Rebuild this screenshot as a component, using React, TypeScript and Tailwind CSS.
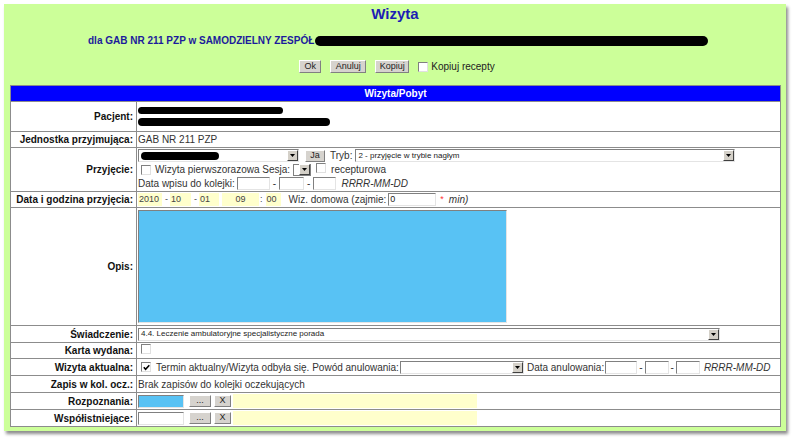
import React from "react";

function Check({ checked = false }: { checked?: boolean }) {
  return (
    <span className="inline-flex w-[10px] h-[10px] shrink-0 items-center justify-center border border-t-[#808080] border-l-[#808080] border-b-[#e0e0e0] border-r-[#e0e0e0] bg-white">
      {checked && (
        <svg width="7" height="7" viewBox="0 0 7 7">
          <path d="M0.8 3.2 L2.6 5.2 L6.3 1.2" stroke="#000" strokeWidth="1.6" fill="none" />
        </svg>
      )}
    </span>
  );
}

function Arrow() {
  return (
    <span className="flex w-[11px] h-[11px] shrink-0 items-center justify-center bg-[#d4d0c8] border border-t-white border-l-white border-r-[#404040] border-b-[#404040]">
      <svg width="5" height="3" viewBox="0 0 5 3">
        <path d="M0 0h5L2.5 3z" fill="#000" />
      </svg>
    </span>
  );
}

function Select({ className, children }: { className: string; children?: React.ReactNode }) {
  return (
    <div className={`flex shrink-0 items-center h-[13px] bg-white border border-t-[#808080] border-l-[#808080] border-b-[#e4e4e4] border-r-[#e4e4e4] ${className}`}>
      <div className="flex-1 flex items-center overflow-hidden whitespace-nowrap pl-[2px] text-[8px] text-[#222]">{children}</div>
      <Arrow />
    </div>
  );
}

function Box({ className }: { className: string }) {
  return (
    <span className={`inline-block shrink-0 h-[13px] bg-white border border-t-[#808080] border-l-[#808080] border-b-[#e4e4e4] border-r-[#e4e4e4] ${className}`} />
  );
}

function Btn({ className, children }: { className: string; children: React.ReactNode }) {
  return (
    <span className={`inline-flex shrink-0 items-center justify-center bg-[#d6d3ce] border border-t-white border-l-white border-r-[#808080] border-b-[#808080] text-[9px] text-[#222] ${className}`}>
      {children}
    </span>
  );
}

function Row({ label, h, children, top = "items-center" }: { label: string; h: string; children?: React.ReactNode; top?: string }) {
  return (
    <div className={`flex border-t border-[#8c8c8c] ${h}`}>
      <div className="w-[126px] shrink-0 flex items-center justify-end pr-[3px] border-r border-[#8c8c8c] whitespace-nowrap text-[10px] font-bold text-[#111]">
        {label}
      </div>
      <div className={`flex-1 flex pl-[1px] whitespace-nowrap text-[10px] text-[#333] ${top}`}>{children}</div>
    </div>
  );
}

export default function App() {
  return (
    <div className="w-[797px] h-[440px] bg-white pt-[4px] pl-[4px] font-['Liberation_Sans',Arial,sans-serif] overflow-hidden">
      <div className="w-[782px] h-[427px] bg-[#ccff99] shadow-[2px_3px_3px_rgba(0,0,0,0.45)] flex flex-col">
        <div className="h-[20px] flex items-center justify-center text-[15px] font-bold text-[#1c1cb4]">Wizyta</div>

        <div className="h-[33px] flex items-center pl-[84px] whitespace-nowrap text-[10px] font-bold text-[#1c1c9c]">
          <span>dla GAB NR 211 PZP w SAMODZIELNY ZESPÓŁ</span>
          <span className="ml-[1px] w-[393px] h-[10px] rounded-full bg-black" />
        </div>

        <div className="h-[19px] flex items-center justify-center gap-[9px] pl-[4px]">
          <Btn className="w-[22px] h-[13px]">Ok</Btn>
          <Btn className="w-[36px] h-[13px]">Anuluj</Btn>
          <Btn className="w-[34px] h-[13px]">Kopiuj</Btn>
          <span className="flex items-center gap-[3px] whitespace-nowrap text-[10px] text-[#222]">
            <Check />
            Kopiuj recepty
          </span>
        </div>

        <div className="mt-[9px] ml-[6px] w-[771px] border border-[#8c8c8c] bg-white flex flex-col">
          <div className="h-[15px] bg-[#0000ff] flex items-center justify-center text-[10px] font-bold text-white">Wizyta/Pobyt</div>

          <Row label="Pacjent:" h="h-[30px]" top="flex-col justify-center gap-[4px]">
            <span className="w-[145px] h-[7px] rounded-full bg-black" />
            <span className="w-[192px] h-[8px] rounded-full bg-black" />
          </Row>

          <Row label="Jednostka przyjmująca:" h="h-[16px]">GAB NR 211 PZP</Row>

          <Row label="Przyjęcie:" h="h-[44px]" top="flex-col justify-center gap-[1px]">
            <div className="flex items-center h-[13px]">
              <Select className="w-[161px]">
                <span className="w-[78px] h-[8px] rounded-full bg-black" />
              </Select>
              <Btn className="ml-[6px] w-[20px] h-[12px]">Ja</Btn>
              <span className="ml-[5px]">Tryb:</span>
              <Select className="ml-[3px] w-[380px]">2 - przyjęcie w trybie nagłym</Select>
            </div>
            <div className="flex items-center h-[13px] pl-[3px]">
              <Check />
              <span className="ml-[4px]">Wizyta pierwszorazowa Sesja:</span>
              <span className="ml-[3px] flex items-center h-[12px] w-[18px] border border-[#808080] bg-white justify-end">
                <Arrow />
              </span>
              <span className="ml-[5px]"><Check /></span>
              <span className="ml-[5px]">recepturowa</span>
            </div>
            <div className="flex items-center h-[13px]">
              <span>Data wpisu do kolejki:</span>
              <Box className="ml-[2px] w-[33px]" />
              <span className="mx-[3px]">-</span>
              <Box className="w-[25px]" />
              <span className="mx-[3px]">-</span>
              <Box className="w-[23px]" />
              <span className="ml-[5px] italic">RRRR-MM-DD</span>
            </div>
          </Row>

          <Row label="Data i godzina przyjęcia:" h="h-[16px]">
            <div className="flex items-center h-[13px] text-[9px] text-[#444]">
              <span className="w-[24px] h-[13px] bg-[#ffffcc] flex items-center pl-[1px]">2010</span>
              <span className="ml-[3px]">-</span>
              <span className="ml-[2px] w-[21px] h-[13px] bg-[#ffffcc] flex items-center pl-[1px]">10</span>
              <span className="ml-[3px]">-</span>
              <span className="ml-[2px] w-[20px] h-[13px] bg-[#ffffcc] flex items-center pl-[1px]">01</span>
              <span className="ml-[3px] w-[37px] h-[13px] bg-[#ffffcc] flex items-center justify-center">09</span>
              <span className="ml-[1px]">:</span>
              <span className="ml-[3px] w-[15px] h-[13px] bg-[#ffffcc] flex items-center pl-[1px]">00</span>
              <span className="ml-[8px] text-[10px] text-[#333]">Wiz. domowa (zajmie:</span>
              <span className="ml-[2px] w-[48px] h-[13px] bg-white border border-t-[#808080] border-l-[#808080] border-b-[#e4e4e4] border-r-[#e4e4e4] flex items-center pl-[1px] text-[#222]">0</span>
              <span className="ml-[4px] text-[#ff3333]">*</span>
              <span className="ml-[5px] text-[10px] italic text-[#333]">min)</span>
            </div>
          </Row>

          <Row label="Opis:" h="h-[118px]">
            <div className="w-[369px] h-[113px] bg-[#58c2f4] border border-t-[#808080] border-l-[#808080] border-b-[#e4e4e4] border-r-[#e4e4e4]" />
          </Row>

          <Row label="Świadczenie:" h="h-[17px]">
            <Select className="w-[582px]">4.4. Leczenie ambulatoryjne specjalistyczne porada</Select>
          </Row>

          <Row label="Karta wydana:" h="h-[16px]">
            <span className="pl-[3px]"><Check /></span>
          </Row>

          <Row label="Wizyta aktualna:" h="h-[17px]">
            <span className="pl-[3px]"><Check checked /></span>
            <span className="ml-[5px]">Termin aktualny/Wizyta odbyła się. Powód anulowania:</span>
            <Select className="ml-[1px] w-[124px]" />
            <span className="ml-[3px]">Data anulowania:</span>
            <Box className="ml-[1px] w-[32px]" />
            <span className="mx-[2px]">-</span>
            <Box className="w-[24px]" />
            <span className="mx-[2px]">-</span>
            <Box className="w-[24px]" />
            <span className="ml-[4px] italic">RRRR-MM-DD</span>
          </Row>

          <Row label="Zapis w kol. ocz.:" h="h-[17px]">Brak zapisów do kolejki oczekujących</Row>

          <Row label="Rozpoznania:" h="h-[17px]">
            <span className="w-[46px] h-[13px] bg-[#58c2f4] border border-t-[#808080] border-l-[#808080] border-b-[#e4e4e4] border-r-[#e4e4e4]" />
            <Btn className="ml-[5px] w-[22px] h-[12px]">...</Btn>
            <Btn className="ml-[3px] w-[17px] h-[12px]">X</Btn>
            <span className="ml-[2px] w-[244px] h-[14px] bg-[#ffffcc]" />
          </Row>

          <Row label="Współistniejące:" h="h-[17px]">
            <Box className="w-[46px]" />
            <Btn className="ml-[5px] w-[22px] h-[12px]">...</Btn>
            <Btn className="ml-[3px] w-[17px] h-[12px]">X</Btn>
            <span className="ml-[2px] w-[244px] h-[14px] bg-[#ffffcc]" />
          </Row>
        </div>
      </div>
    </div>
  );
}
